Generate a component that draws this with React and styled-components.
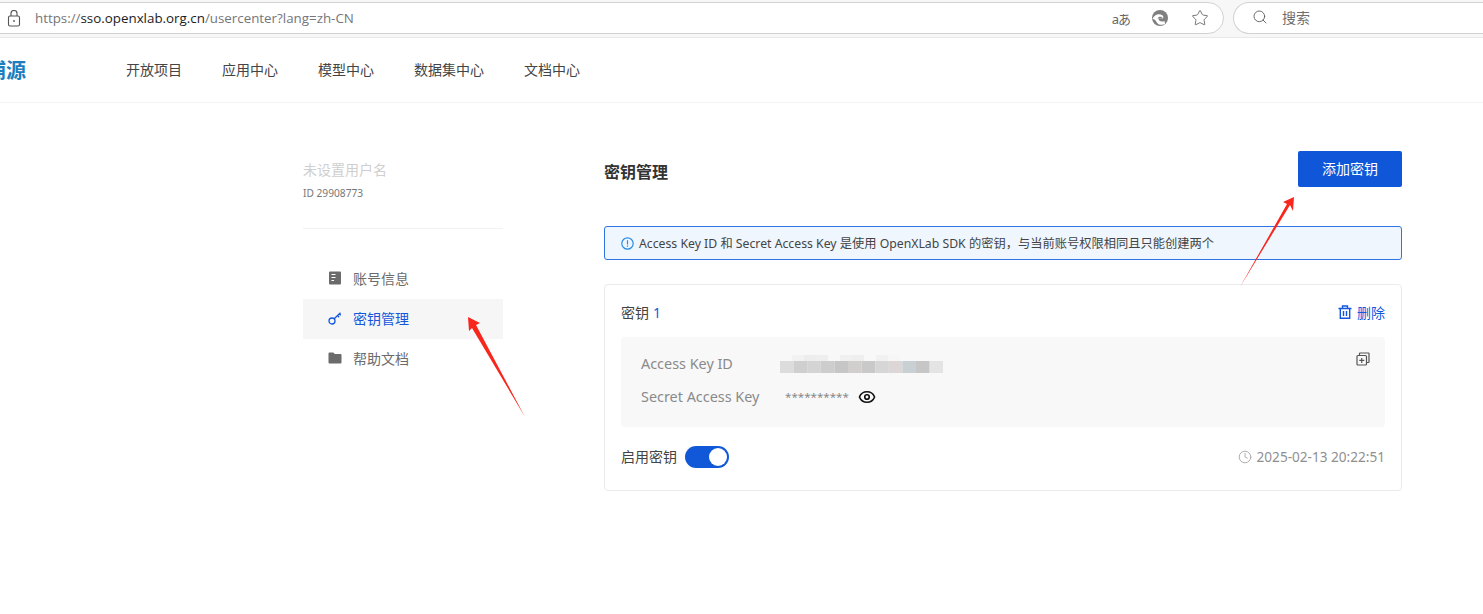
import React from "react";
import styled, { createGlobalStyle } from "styled-components";
import { Star, Search, Clock, Eye } from "lucide-react";

const GlobalStyle = createGlobalStyle`
  html, body { margin: 0; padding: 0; background: #fff; }
  * { box-sizing: border-box; }
  body { font-family: "Noto Sans", "Noto Sans CJK SC", sans-serif; }
`;

const Page = styled.div`
  position: relative;
  width: 1483px;
  height: 614px;
  overflow: hidden;
  background: #fff;
`;

const BrowserBar = styled.div`
  display: flex;
  align-items: flex-start;
  gap: 9px;
  height: 38px;
  padding-top: 2px;
  background: #f7f7f7;
  border-bottom: 1px solid #e8e8e8;
`;

const UrlPill = styled.div`
  display: flex;
  flex: 0 0 1234px;
  align-items: center;
  height: 32px;
  margin-left: -10px;
  padding: 0 14px 0 16px;
  background: #fff;
  border: 1px solid #d2d2d2;
  border-radius: 0 17px 17px 0;
`;

const UrlText = styled.div`
  margin-left: 14px;
  flex: 1;
  font-family: "Open Sans", "Noto Sans", sans-serif;
  font-size: 13.35px;
  color: #75757a;
  span { color: #1b1b1b; }
`;

const BarIcons = styled.div`
  display: flex;
  align-items: center;
  gap: 22px;
  color: #666;
`;

const ReadAloud = styled.span`
  margin-right: -1px;
  font-size: 13px;
  color: #666;
  letter-spacing: -1px;
`;

const SearchPill = styled.div`
  display: flex;
  flex: 0 0 300px;
  align-items: center;
  gap: 14px;
  height: 32px;
  padding: 0 0 2px 18px;
  background: #fff;
  border: 1px solid #d2d2d2;
  border-right: 0;
  border-radius: 17px 0 0 17px;
  font-size: 14px;
  color: #6f6f6f;
`;

const Nav = styled.div`
  display: flex;
  align-items: center;
  height: 65px;
  padding-bottom: 2px;
  border-bottom: 1px solid #f3f3f3;
`;

const Logo = styled.div`
  width: 140px;
  margin-left: -14px;
  font-size: 20px;
  font-weight: 700;
  color: #1c7ebd;
  white-space: nowrap;
`;

const NavLinks = styled.div`
  display: flex;
  gap: 40px;
`;

const NavLink = styled.span`
  font-size: 14px;
  color: #444;
`;

const Body = styled.div`
  display: flex;
  padding: 48px 81px 0 303px;
`;

const Sidebar = styled.aside`
  width: 200px;
  margin-right: 101px;
`;

const UserName = styled.div`
  margin-top: 9px;
  font-size: 14px;
  line-height: 20px;
  color: #cfcfcf;
`;

const UserId = styled.div`
  margin-top: 6px;
  font-size: 10.2px;
  line-height: 14px;
  color: #777;
`;

const Divider = styled.div`
  height: 1px;
  margin: 28px 0 30px;
  background: #f1f1f1;
`;

const MenuItem = styled.div`
  display: flex;
  align-items: center;
  gap: 11px;
  height: 40px;
  padding: 0 0 2px 25px;
  font-size: 14px;
  color: ${(p) => (p.$active ? "#1257dc" : "#6b6b6b")};
  background: ${(p) => (p.$active ? "#f6f6f6" : "transparent")};
`;

const Main = styled.main`
  width: 798px;
`;

const TitleRow = styled.div`
  display: flex;
  align-items: center;
  justify-content: space-between;
  height: 36px;
`;

const Title = styled.h2`
  margin: 4px 0 0;
  font-size: 16px;
  font-weight: 700;
  color: #333;
`;

const AddButton = styled.button`
  width: 104px;
  height: 36px;
  padding: 0 0 3px;
  border: 0;
  border-radius: 2px;
  background: #0f57d8;
  color: #fff;
  font: inherit;
  font-size: 14px;
`;

const Alert = styled.div`
  display: flex;
  align-items: center;
  gap: 5px;
  height: 34px;
  margin-top: 39px;
  padding-left: 16px;
  border: 1px solid #2f74e6;
  border-radius: 3px;
  background: #eff6fe;
  font-size: 12.25px;
  color: #444;
`;

const Card = styled.section`
  height: 207px;
  margin-top: 24px;
  padding: 16px;
  border: 1px solid #ebebef;
  border-radius: 4px;
`;

const CardHead = styled.div`
  display: flex;
  align-items: center;
  justify-content: space-between;
  height: 24px;
  margin-bottom: 12px;
  padding-bottom: 3px;
  font-size: 14px;
  color: #444;
  b { margin-left: 4px; font-weight: 400; color: #1257dc; }
`;

const DeleteLink = styled.span`
  display: flex;
  align-items: center;
  gap: 5px;
  font-size: 14px;
  color: #1257dc;
`;

const KeyPanel = styled.div`
  display: flex;
  justify-content: space-between;
  height: 90px;
  padding: 10px 15px 0 20px;
  border-radius: 4px;
  background: #f8f8f8;
`;

const KeyRow = styled.div`
  display: flex;
  align-items: center;
  height: 33px;
`;

const KeyLabel = styled.span`
  width: ${(p) => p.$width}px;
  font-size: 14.4px;
  color: #8a8a8a;
`;

const Stars = styled.span`
  margin-right: 9px;
  font-size: 11.6px;
  color: #888;
`;

const CopyButton = styled.span`
  margin-top: 2px;
  color: #555;
`;

const CardFoot = styled.div`
  display: flex;
  align-items: center;
  justify-content: space-between;
  margin-top: 19px;
`;

const SwitchLabel = styled.div`
  display: flex;
  align-items: center;
  gap: 8px;
  font-size: 14px;
  color: #444;
  span:first-child { margin-top: -3px; }
`;

const Switch = styled.span`
  display: flex;
  justify-content: flex-end;
  align-items: center;
  width: 44px;
  height: 22px;
  padding: 2px;
  border-radius: 11px;
  background: #1158d8;
  &::after {
    content: "";
    width: 18px;
    height: 18px;
    border-radius: 50%;
    background: #fff;
  }
`;

const DateText = styled.span`
  display: flex;
  align-items: center;
  gap: 5px;
  margin-top: -1px;
  font-size: 13.6px;
  color: #8f8f8f;
`;

const Arrows = styled.svg`
  position: absolute;
  inset: 0;
  pointer-events: none;
`;

const navItems = ["开放项目", "应用中心", "模型中心", "数据集中心", "文档中心"];

// blurred-out key value, top row is only partly filled
const mosaic = [
  ["#f2f2f2", "#ededed", "#eeeeee", "#f8f8f8", "#f0f0f0", "#eeeeee", "#f8f8f8", "#f1f1f1", "#f6f6f6", "#f8f8f8"],
  ["#dcdcdc", "#cfcfcf", "#d4d4d4", "#cdcdcd", "#c6c6c6", "#d2cece", "#c9c9c9", "#d6d6d6", "#dcd6d6", "#c9d0d4", "#c6c6c6", "#e4e4e4"],
];

function KeyMosaic() {
  return (
    <svg width="163" height="18" viewBox="0 0 163 18">
      {mosaic[0].map((c, i) => (
        <rect key={i} x={12 + i * 12} y="0" width="12" height="6" fill={c} />
      ))}
      {mosaic[1].map((c, i) => (
        <rect key={i} x={i * 13.6} y="6" width="13.6" height="12" fill={c} />
      ))}
    </svg>
  );
}

function LockIcon() {
  return (
    <svg width="14" height="17" viewBox="0 0 14 17" fill="none" stroke="#555" strokeWidth="1.1">
      <rect x="1.5" y="6" width="11" height="10" rx="1.5" />
      <path d="M4 6V3.5a3 3 0 0 1 6 0V6" />
      <circle cx="7" cy="11" r="0.9" fill="#555" stroke="none" />
    </svg>
  );
}

function EdgeIcon() {
  return (
    <svg width="18" height="18" viewBox="0 0 18 18">
      <circle cx="9" cy="9" r="8" fill="#808080" />
      <path d="M1.5 10C3 5.5 8 4 11 6c1.5 1 1.5 2.500 1 3.500H7.500c0 2.500 3 4 6 2.500L14 15c-3 1.500-7 1-8.500-2-1-1.800-2-3-4-3z" fill="#fff" />
      <path d="M6.500 9.500c1-2 4-2.500 5.500 0z" fill="#808080" />
    </svg>
  );
}

function BookIcon() {
  return (
    <svg width="14" height="14" viewBox="0 0 14 14">
      <rect x="1" y="0.500" width="12" height="13" rx="1" fill="#6b6b6b" />
      <path d="M3.500 3.500h4M3.500 6.500h4M3.500 9.500h2.500" stroke="#fff" strokeWidth="1.200" />
    </svg>
  );
}

function KeyIcon() {
  return (
    <svg width="14" height="14" viewBox="0 0 14 14" fill="none" stroke="#1257dc" strokeWidth="1.300">
      <circle cx="4" cy="10" r="3" />
      <path d="M6.200 7.800 12.500 1.800M9.500 4.600l1.700 1.600M11.300 2.900l1.500 1.400" />
    </svg>
  );
}

function FolderIcon() {
  return (
    <svg width="14" height="14" viewBox="0 0 14 14">
      <path d="M0.500 2.500a1 1 0 0 1 1-1h3.800l1.500 1.500h5.700a1 1 0 0 1 1 1v7.500a1 1 0 0 1-1 1h-11a1 1 0 0 1-1-1z" fill="#6b6b6b" />
    </svg>
  );
}

function InfoIcon() {
  return (
    <svg width="13" height="13" viewBox="0 0 13 13" fill="none" stroke="#2b8ce8" strokeWidth="1.200">
      <circle cx="6.500" cy="6.500" r="5.700" />
      <path d="M6.500 3.200v4.200M6.500 8.600v1.200" />
    </svg>
  );
}

function CopyIcon() {
  return (
    <svg width="14" height="14" viewBox="0 0 14 14" fill="none" stroke="#555" strokeWidth="1.200">
      <rect x="1" y="3.500" width="9.500" height="9.500" rx="1" />
      <path d="M3.500 3.500V1.500a.5.500 0 0 1 .5-.5h8.500a.5.500 0 0 1 .5.500V10a.5.500 0 0 1-.5.500h-2" />
      <path d="M5.700 6v5M3.300 8.300h5" />
    </svg>
  );
}

function TrashIcon() {
  return (
    <svg width="14" height="14" viewBox="0 0 14 14" fill="none" stroke="#1257dc" strokeWidth="1.400">
      <path d="M0.500 3.500h13M4.500 3.500V1h5v2.500" />
      <path d="M2.300 3.500v9.800h9.400V3.500" />
      <path d="M5.500 6v5M8.500 6v5" />
    </svg>
  );
}

export default function App() {
  return (
    <Page>
      <GlobalStyle />
      <BrowserBar>
        <UrlPill>
          <LockIcon />
          <UrlText>
            https://<span>sso.openxlab.org.cn</span>/usercenter?lang=zh-CN
          </UrlText>
          <BarIcons>
            <ReadAloud>aあ</ReadAloud>
            <EdgeIcon />
            <Star size={18} strokeWidth={1.2} />
          </BarIcons>
        </UrlPill>
        <SearchPill>
          <Search size={16} strokeWidth={1.3} color="#555" />
          搜索
        </SearchPill>
      </BrowserBar>

      <Nav>
        <Logo>浦源</Logo>
        <NavLinks>
          {navItems.map((item) => (
            <NavLink key={item}>{item}</NavLink>
          ))}
        </NavLinks>
      </Nav>

      <Body>
        <Sidebar>
          <UserName>未设置用户名</UserName>
          <UserId>ID 29908773</UserId>
          <Divider />
          <MenuItem>
            <BookIcon />
            账号信息
          </MenuItem>
          <MenuItem $active>
            <KeyIcon />
            密钥管理
          </MenuItem>
          <MenuItem>
            <FolderIcon />
            帮助文档
          </MenuItem>
        </Sidebar>

        <Main>
          <TitleRow>
            <Title>密钥管理</Title>
            <AddButton>添加密钥</AddButton>
          </TitleRow>
          <Alert>
            <InfoIcon />
            Access Key ID 和 Secret Access Key 是使用 OpenXLab SDK 的密钥，与当前账号权限相同且只能创建两个
          </Alert>
          <Card>
            <CardHead>
              <span>
                密钥<b>1</b>
              </span>
              <DeleteLink>
                <TrashIcon />
                删除
              </DeleteLink>
            </CardHead>
            <KeyPanel>
              <div>
                <KeyRow>
                  <KeyLabel $width={139}>Access Key ID</KeyLabel>
                  <KeyMosaic />
                </KeyRow>
                <KeyRow>
                  <KeyLabel $width={144}>Secret Access Key</KeyLabel>
                  <Stars>**********</Stars>
                  <Eye size={18} strokeWidth={2.2} color="#111" />
                </KeyRow>
              </div>
              <CopyButton>
                <CopyIcon />
              </CopyButton>
            </KeyPanel>
            <CardFoot>
              <SwitchLabel>
                <span>启用密钥</span>
                <Switch />
              </SwitchLabel>
              <DateText>
                <Clock size={14} strokeWidth={1.6} color="#aaa" />
                2025-02-13 20:22:51
              </DateText>
            </CardFoot>
          </Card>
        </Main>
      </Body>

      <Arrows width="1483" height="614" viewBox="0 0 1483 614">
        <polygon points="468,317 480,323 476,325 525,417 472,328 469,331" fill="#f8261c" />
        <polygon points="1294,197 1293,211 1290,205 1240,287 1287,204 1283,202" fill="#f8261c" />
      </Arrows>
    </Page>
  );
}
